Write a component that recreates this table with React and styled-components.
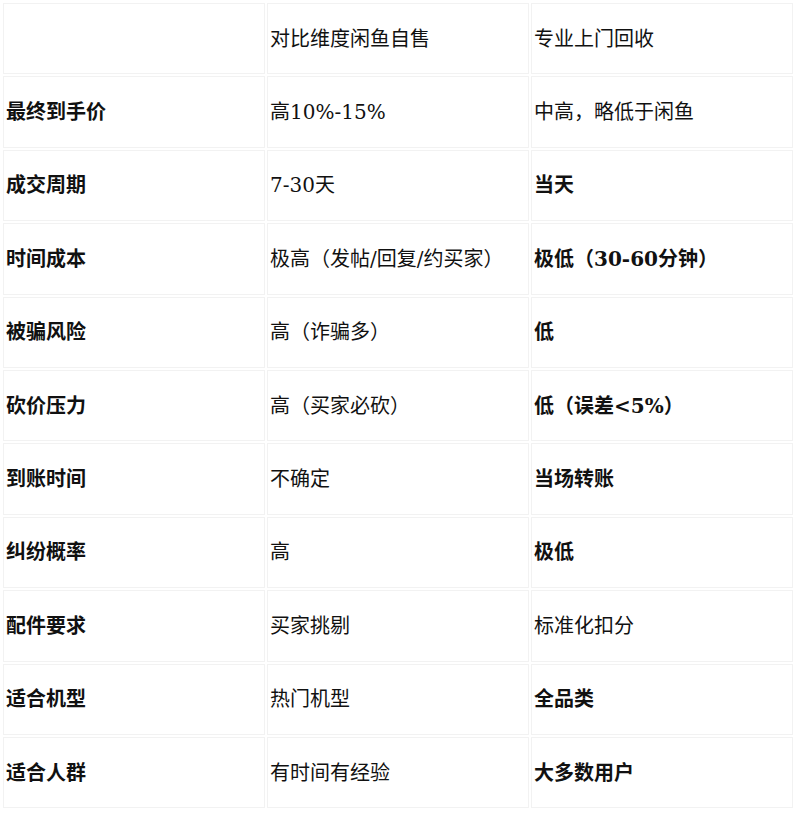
import React from "react";
import styled, { createGlobalStyle } from "styled-components";

const GlobalStyle = createGlobalStyle`
  html, body {
    margin: 0;
    padding: 0;
    background: #ffffff;
  }
`;

const rows = [
  ["最终到手价", "高10%-15%", "中高，略低于闲鱼", false],
  ["成交周期", "7-30天", "当天", true],
  ["时间成本", "极高（发帖/回复/约买家）", "极低（30-60分钟）", true],
  ["被骗风险", "高（诈骗多）", "低", true],
  ["砍价压力", "高（买家必砍）", "低（误差<5%）", true],
  ["到账时间", "不确定", "当场转账", true],
  ["纠纷概率", "高", "极低", true],
  ["配件要求", "买家挑剔", "标准化扣分", false],
  ["适合机型", "热门机型", "全品类", true],
  ["适合人群", "有时间有经验", "大多数用户", true],
];

export default function App() {
  return (
    <Page>
      <GlobalStyle />
      <Table>
        <tbody>
          <tr>
            <Cell />
            <Cell>对比维度闲鱼自售</Cell>
            <Cell>专业上门回收</Cell>
          </tr>
          {rows.map(([label, self, pro, strong]) => (
            <tr key={label}>
              <Cell $bold>{label}</Cell>
              <Cell>{self}</Cell>
              <Cell $bold={strong}>{pro}</Cell>
            </tr>
          ))}
        </tbody>
      </Table>
    </Page>
  );
}

const Page = styled.div`
  padding: 1px;
  font-family: "DejaVu Serif", "Noto Sans CJK SC", serif;
  color: #111111;
`;

const Table = styled.table`
  width: 794px;
  table-layout: fixed;
  border-collapse: separate;
  border-spacing: 2px;
`;

const Cell = styled.td`
  height: 71.4px;
  box-sizing: border-box;
  border: 1px solid #f2f2f2;
  padding: 0 2px;
  font-size: 20px;
  line-height: 1.2;
  font-weight: ${({ $bold }) => ($bold ? 700 : 400)};
  vertical-align: middle;
`;
